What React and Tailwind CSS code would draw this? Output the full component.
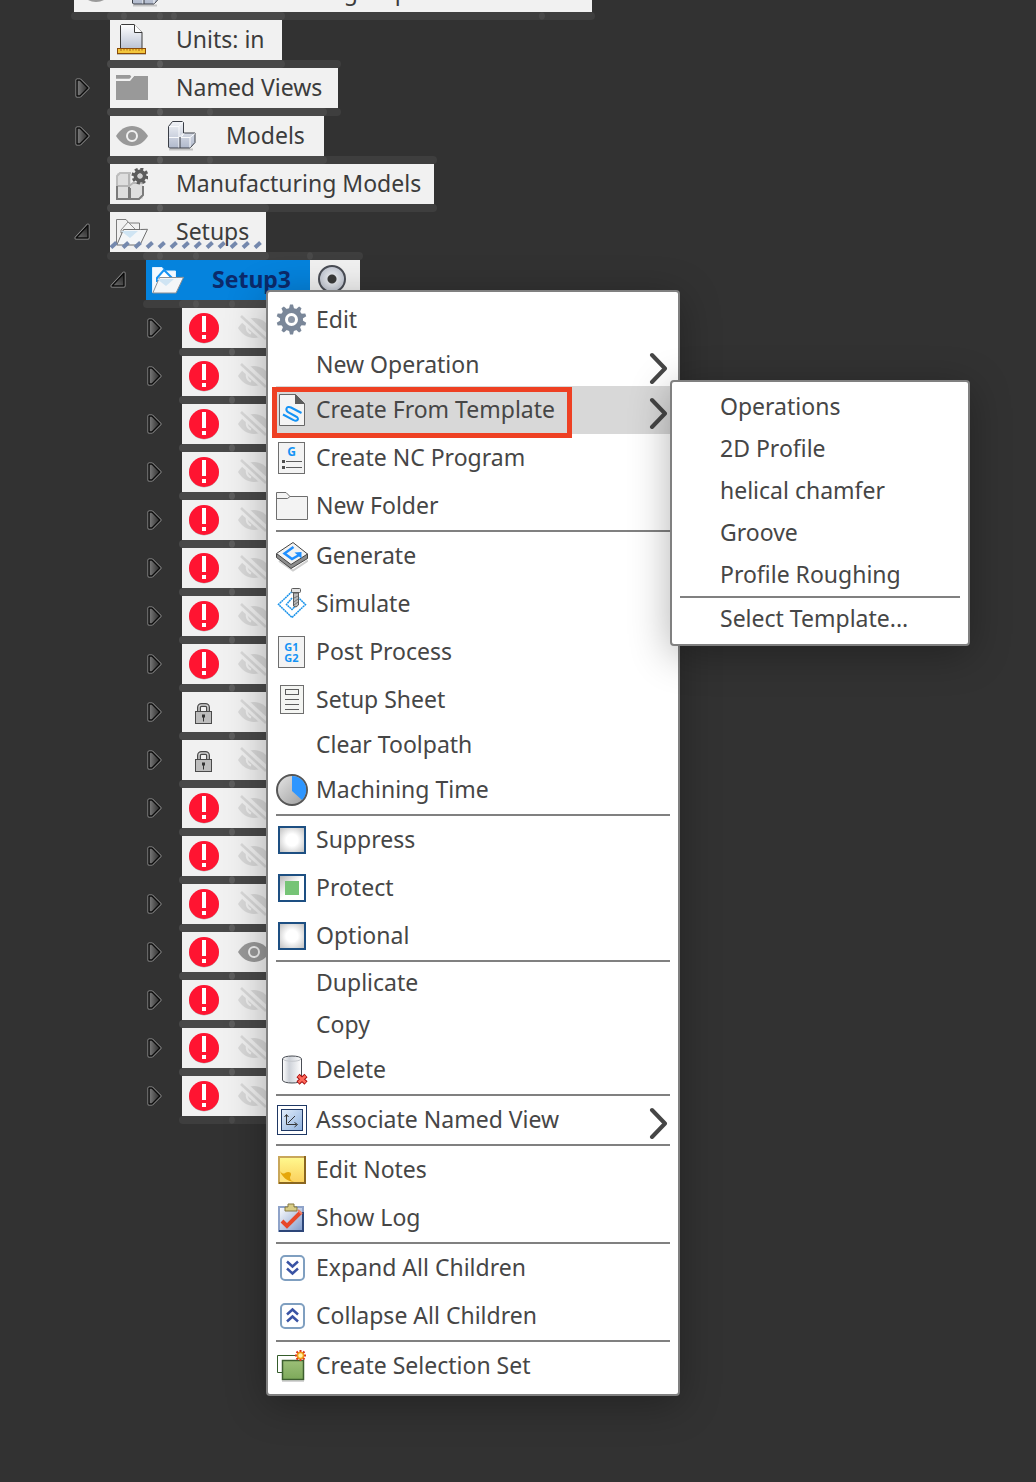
import React from "react";

const Svg = ({ children, label }) => (
  <svg width="32" height="32" viewBox="0 0 32 32" className="block shrink-0" aria-hidden={label ? undefined : true} aria-label={label}>
    {children}
  </svg>
);

/* ---------- tree icons ---------- */

const EyeIcon = () => (
  <Svg label="Visible">
    <path d="M0 16C4 9.500 9.500 6 16 6s12 3.500 16 10c-4 6.500-9.500 10-16 10S4 22.500 0 16z" fill="#999" />
    <circle cx="16" cy="16" r="5" fill="none" stroke="#f1f1f1" strokeWidth="2" />
  </Svg>
);

const EyeOffIcon = () => (
  <Svg label="Hidden">
    <path d="M0 16C4 9.500 9.500 6 16 6s12 3.500 16 10c-4 6.500-9.500 10-16 10S4 22.500 0 16z" fill="#d9d9d9" />
    <path d="M11 10.500a6.500 6.500 0 0 0 2 11" fill="none" stroke="#f1f1f1" strokeWidth="2" />
    <path d="M0 1l32 29" stroke="#f1f1f1" strokeWidth="9" />
    <path d="M3 4l25 23" stroke="#d9d9d9" strokeWidth="2.500" />
  </Svg>
);

const AlertIcon = () => (
  <Svg label="Error">
    <circle cx="16" cy="16.500" r="15" fill="#b9b9b9" />
    <circle cx="16" cy="16" r="15" fill="#ff1431" />
    <path d="M14 4h4v16h-4zM14 23h4v4h-4z" fill="#fff" />
  </Svg>
);

const LockIcon = () => (
  <Svg label="Protected">
    <path d="M11 16v-4.500a2.500 2.500 0 0 1 2.500-2.500h4a2.500 2.500 0 0 1 2.500 2.500V16" fill="none" stroke="#4a4a4a" strokeWidth="4" />
    <path d="M11 16v-4.500a2.500 2.500 0 0 1 2.500-2.500h4a2.500 2.500 0 0 1 2.500 2.500V16" fill="none" stroke="#d0d0d0" strokeWidth="1.500" />
    <rect x="7.500" y="15.500" width="16" height="12" fill="#bdbdbd" stroke="#4a4a4a" />
    <path d="M14 18.500h3v3h-1v4h-1v-4h-1z" fill="#333" />
  </Svg>
);

const UnitsIcon = () => (
  <Svg>
    <defs>
      <linearGradient id="units-page" x1="0" y1="0" x2="0" y2="1">
        <stop offset="0" stopColor="#fff" />
        <stop offset="1" stopColor="#b9c1d3" />
      </linearGradient>
    </defs>
    <path d="M4.500 25V1.500l1-1H18l8 8V25z" fill="url(#units-page)" stroke="#3a3a3a" />
    <path d="M18.500.5v8H26" fill="#fff" stroke="#3a3a3a" />
    <path d="M1 30.500h29" stroke="#bbb" />
    <rect x="1.500" y="24.500" width="28" height="5" fill="#f3c63c" stroke="#8a4b08" />
    <path d="M5 25v2M8 25v1.500M11 25v1.500M14 25v2M17 25v1.500M20 25v1.500M23 25v2M26 25v1.500" stroke="#a8650f" />
  </Svg>
);

const FolderIcon = () => (
  <Svg>
    <path d="M0 9h14l4-5h14v24H0z" fill="#999" />
    <path d="M0 3h14l1.500 2-2 2H0z" fill="#999" />
    <path d="M0 7.500h14l3.500-4" fill="none" stroke="#f1f1f1" strokeWidth="1.500" />
  </Svg>
);

const BodiesIcon = () => (
  <Svg>
    <defs>
      <linearGradient id="body-fill" x1="0" y1="0" x2="0" y2="1">
        <stop offset="0" stopColor="#f1f3f7" />
        <stop offset="1" stopColor="#b0b9cc" />
      </linearGradient>
    </defs>
    <path d="M3 29.500h24" stroke="#c4c4c4" strokeWidth="2" />
    <path d="M2.500 6.500l4-5h10l1 1V13h11.500v9.500l-5 5.500H3.500l-1-1z" fill="url(#body-fill)" stroke="#3a3e46" />
    <path d="M3 6.500h10v21M13 6.500l4-5M15 17.500h9v10M15 17.500l3-4M24 17.500l5-4M3 17.500h10l4-4" fill="none" stroke="#f9fafc" />
    <path d="M14 17v11" stroke="#3a3e46" />
  </Svg>
);

const ManufacturingIcon = () => (
  <Svg>
    <path d="M1 5h14v11h12v15H1z" fill="#dedede" />
    <path d="M1 18V8l3-3h11" fill="none" stroke="#bdbdbd" strokeWidth="2" />
    <path d="M1 18h12V6M13 18l4-3h10" fill="none" stroke="#b5b5b5" strokeWidth="2" />
    <path d="M1 18v13h12V19M14 31h9l4-4V18M14 20v11M1 31h22" fill="none" stroke="#7b7b7b" strokeWidth="2" />
    <circle cx="24" cy="8" r="4.500" fill="none" stroke="#5c5c5c" strokeWidth="4" />
    <circle cx="24" cy="8" r="7" fill="none" stroke="#5c5c5c" strokeWidth="3" strokeDasharray="3 2.500" />
    <circle cx="24" cy="8" r="2.500" fill="#d0d0d0" />
  </Svg>
);

const SetupFolderIcon = ({ bright }) => (
  <Svg>
    <path d="M.5 29V3.500H10L13 7h10.500v9" fill={bright ? "#f3f9ff" : "none"} stroke={bright ? "#dff0ff" : "#7c7c7c"} />
    <path d="M5 14l7-8 8 8v3H5z" fill={bright ? "#fff" : "#f4f4f4"} stroke={bright ? "#1593f5" : "#8d8d8d"} strokeWidth={bright ? 2 : 1} />
    <path d="M7.500 13.500h17l7-.2-7.500 15.700H.800z" fill="#f4f6f8" stroke={bright ? "#8b8f94" : "#6e6e6e"} />
    <path d="M5 15h17l-8 7z" fill="#cfe4f3" />
  </Svg>
);

const Expander = ({ open }) => (
  <button type="button" aria-label={open ? "Collapse" : "Expand"} className="block">
    <svg width="16" height="20" viewBox="0 0 16 20" className="block">
      <defs>
        <linearGradient id="expander-fill">
          <stop offset="0" stopColor="#7d7d7d" />
          <stop offset="1" stopColor="#2a2a2a" />
        </linearGradient>
        <linearGradient id="expander-open" x1="1" y1="0" x2="0.3" y2="1">
          <stop offset="0" stopColor="#1a1a1a" />
          <stop offset="1" stopColor="#666" />
        </linearGradient>
      </defs>
      {open ? (
        <g strokeLinejoin="round">
          <path d="M14 3v13H2z" fill="#000" stroke="#9a9a9a" strokeWidth="3" />
          <path d="M14 3v13H2z" fill="url(#expander-open)" stroke="#0c0c0c" strokeWidth="1.500" />
        </g>
      ) : (
        <g strokeLinejoin="round">
          <path d="M3 2h3l8 8-8 8H3z" fill="#000" stroke="#9a9a9a" strokeWidth="3" />
          <path d="M3 2h3l8 8-8 8H3z" fill="url(#expander-fill)" stroke="#0c0c0c" strokeWidth="1.500" />
        </g>
      )}
    </svg>
  </button>
);

/* ---------- menu icons ---------- */

const GearIcon = () => (
  <Svg>
    <g fill="#7a8799">
      {[0, 36, 72, 108, 144].map((a) => (
        <path key={a} d="M14 0.500h3l1 4v22l-1 4h-3l-1-4v-22z" transform={`rotate(${a} 15.500 15.500)`} />
      ))}
      <circle cx="15.500" cy="15.500" r="11.500" />
    </g>
    <circle cx="15.500" cy="15.500" r="5" fill="#8a95a5" stroke="#fff" strokeWidth="3" />
  </Svg>
);

const TemplateIcon = () => (
  <Svg>
    <path d="M3.500.5h16l9 9v22h-25z" fill="#f4f4f4" stroke="#666" />
    <path d="M19 0v10h10z" fill="#5c5c5c" />
    <path d="M25.500 19L15 13.500c-2-1-4-.5-4.500 1s.5 3 2 4l7.500 4c2 1 2.500 2.500 1.500 3.500s-2.500 1-4 0L7 20.500" fill="none" stroke="#1593f5" strokeWidth="2" />
  </Svg>
);

const NcProgramIcon = () => (
  <Svg>
    <rect x="2.500" y=".5" width="26" height="31" fill="#f3f3f3" stroke="#6e6e6e" />
    <text x="15.500" y="14" textAnchor="middle" fontFamily="Noto Sans" fontWeight="700" fontSize="12" fill="#1593f5">G</text>
    <path d="M6 18h3v3H6zM6 24h3v3H6z" fill="#4e4e4e" />
    <path d="M10 19.500h16M10 25.500h16" stroke="#5c5c5c" />
  </Svg>
);

const NewFolderIcon = () => (
  <Svg>
    <path d="M.5 2.500H10l4 4h17.500v23H.5z" fill="#f3f3f3" stroke="#6e6e6e" />
    <path d="M.5 8.500h11l2.500-2" fill="none" stroke="#6e6e6e" />
  </Svg>
);

const GenerateIcon = () => (
  <Svg>
    <path d="M3 21l14 9.500 15-10" fill="none" stroke="#cfcfcf" strokeWidth="2" />
    <path d="M.5 14v3.500L15 28.500l16.500-10V14z" fill="#8d8d8d" stroke="#444" />
    <path d="M.5 13.500L17 2.500l14.500 11.500L15 24.500z" fill="#f3f3f3" stroke="#444" />
    <path d="M17.500 7l-9 6.500 7.500 5.500 8-4.500" fill="none" stroke="#1f8fff" strokeWidth="2.500" />
    <path d="M18.500 12.500l7-.5 0 6.500z" fill="#1f8fff" />
  </Svg>
);

const SimulateIcon = () => (
  <Svg>
    <path d="M16 3.500L2.500 16.500l13.500 13 13.500-13z" fill="#fff" stroke="#1b93ea" strokeWidth="1.500" strokeDasharray="2 .5" />
    <path d="M16 10l-5.500 6.500 5.500 5 5-5" fill="none" stroke="#1b93ea" strokeWidth="1.500" strokeDasharray="2 .5" />
    <path d="M17.500 5h5v12l-2.500 2-2.500-1z" fill="#b9b9b9" stroke="#5b5b5b" />
    <path d="M18 10l4-2M18 14l4-3M18 17l4-3" stroke="#777" />
    <rect x="15.500" y=".5" width="9" height="4" rx="1" fill="#e3e3e3" stroke="#5b5b5b" />
  </Svg>
);

const PostIcon = () => (
  <Svg>
    <rect x="2.500" y=".5" width="26" height="31" fill="#f3f3f3" stroke="#6e6e6e" />
    <g fontFamily="Noto Sans" fontWeight="700" fontSize="11" fill="#1593f5" textAnchor="middle">
      <text x="15.500" y="15">G1</text>
      <text x="15.500" y="26">G2</text>
    </g>
  </Svg>
);

const SheetIcon = () => (
  <Svg>
    <rect x="4.500" y="1.500" width="23" height="28" fill="#f4f5f2" stroke="#6e6e6e" />
    <rect x="9.500" y="5.500" width="13" height="5" fill="none" stroke="#5c5c5c" />
    <path d="M9 15.500h14M9 20.500h14M9 25.500h14" stroke="#5c5c5c" />
  </Svg>
);

const TimeIcon = () => (
  <Svg>
    <defs>
      <linearGradient id="clock-face" x1="0" y1="0" x2="1" y2="1">
        <stop offset="0" stopColor="#e6e6e6" />
        <stop offset="1" stopColor="#9b9b9b" />
      </linearGradient>
    </defs>
    <circle cx="16" cy="16" r="15" fill="url(#clock-face)" stroke="#565656" strokeWidth="2" />
    <path d="M16 2a14 14 0 0 1 10 24L16 17z" fill="#2e96ff" />
  </Svg>
);

const DeleteIcon = () => (
  <Svg>
    <defs>
      <linearGradient id="bin-fill">
        <stop offset="0" stopColor="#fff" />
        <stop offset=".35" stopColor="#cdd1d8" />
        <stop offset="1" stopColor="#fff" />
      </linearGradient>
    </defs>
    <path d="M6.500 5c0-4 19-4 19 0v21c0 4-19 4-19 0z" fill="url(#bin-fill)" stroke="#4a4e55" />
    <path d="M7 5c1 3 17 3 18 0" fill="none" stroke="#c5c8cd" />
    <path d="M22 21.500l8 7.500M30 21.500l-8 7.500" stroke="#a80f0f" strokeWidth="4.500" />
    <path d="M22.500 22l7 6.500M29.500 22l-7 6.500" stroke="#ff6a5c" strokeWidth="2.500" />
  </Svg>
);

const NamedViewIcon = () => (
  <Svg>
    <defs>
      <linearGradient id="view-fill" x1="0" y1="0" x2="1" y2="1">
        <stop offset="0" stopColor="#e2edfb" />
        <stop offset="1" stopColor="#8fb1dd" />
      </linearGradient>
    </defs>
    <rect x="1.500" y="1.500" width="29" height="29" fill="#fff" stroke="#1f3864" />
    <rect x="5.500" y="5.500" width="21" height="21" fill="url(#view-fill)" stroke="#1f3864" />
    <path d="M10.500 11v9.500h10M12 19l7-7M8.500 13l2-2.500 2 2.500M18.500 18.500l3 2-3 2.500" fill="none" stroke="#333" />
  </Svg>
);

const NotesIcon = () => (
  <Svg>
    <defs>
      <linearGradient id="note-fill" x1="0" y1="0" x2="0" y2="1">
        <stop offset="0" stopColor="#fff98f" />
        <stop offset="1" stopColor="#fbcf5c" />
      </linearGradient>
    </defs>
    <rect x="3" y="3" width="26" height="26" fill="url(#note-fill)" stroke="#c9a75a" strokeWidth="2" />
    <path d="M29 2v27H3" fill="none" stroke="#8a6620" strokeWidth="2" />
    <path d="M4 16c2 6 6 10 14 12H4z" fill="#ffe27a" />
    <path d="M4 17c2 3 4 3 5 2 3-2 6-1 6 1s-1 2-1 4 2 3 4 4c-7-1-12-5-14-11z" fill="#e5a60a" />
  </Svg>
);

const LogIcon = () => (
  <Svg>
    <defs>
      <linearGradient id="log-fill" x1="0" y1="0" x2="1" y2="1">
        <stop offset="0" stopColor="#fff" />
        <stop offset="1" stopColor="#7f9acb" />
      </linearGradient>
    </defs>
    <rect x="3" y="5" width="24" height="24" fill="url(#log-fill)" stroke="#8fa3c9" strokeWidth="2" />
    <path d="M27 10v19H3" fill="none" stroke="#2d4679" strokeWidth="2" />
    <path d="M9 5h3V2h6v3h3v4H9z" fill="#d8cc84" stroke="#857842" />
    <path d="M6 19l5 5L25 10" fill="none" stroke="#e8482a" strokeWidth="4" />
    <path d="M22 8l4 4" stroke="#f08068" strokeWidth="2" />
  </Svg>
);

const ExpandAllIcon = ({ up }) => (
  <Svg>
    <rect x="5" y="4" width="23" height="24" rx="4" fill="#fff" stroke="#7f9fc0" strokeWidth="2" />
    <path
      d={up ? "M11 14.500l5.500-5 5.500 5M11 21.500l5.500-5 5.500 5" : "M11 9.500l5.500 5 5.500-5M11 16.500l5.500 5 5.500-5"}
      fill="none" stroke="#3953a4" strokeWidth="2.500"
    />
  </Svg>
);

const SelectionSetIcon = () => (
  <Svg>
    <defs>
      <linearGradient id="set-fill" x1="0" y1="0" x2="0" y2="1">
        <stop offset="0" stopColor="#9cbf78" />
        <stop offset="1" stopColor="#7da95a" />
      </linearGradient>
    </defs>
    <path d="M6 22.500H1.500v-17H20" fill="none" stroke="#355c2b" />
    <rect x="6.500" y="10.500" width="21" height="19" fill="url(#set-fill)" stroke="#3d5f2f" strokeWidth="1.500" />
    <path d="M6 31h22" stroke="#a9a9a9" />
    <path d="M24.500 0v11M19 5.500h11M20.500 1.500l8 8M28.500 1.500l-8 8" stroke="#d8321c" strokeWidth="2" />
    <circle cx="24.500" cy="5.500" r="3" fill="#fff6a8" stroke="#f39a14" strokeWidth="1.500" />
  </Svg>
);

const Chevron = () => (
  <svg width="20" height="32" viewBox="0 0 20 32" className="mt-1.5 mr-px block shrink-0" aria-hidden="true">
    <path d="M3 3L16 16.500 3 30" fill="none" stroke="#464646" strokeWidth="4" strokeLinecap="round" strokeLinejoin="round" />
  </svg>
);

/* ---------- tree ---------- */

const Cell = ({ children, className = "" }) => (
  <div
    className={
      "relative flex h-10 shrink-0 items-center bg-[#f1f1f1] before:absolute before:-inset-x-[3px] before:-top-2 before:h-2 before:rounded-sm before:bg-white/6 after:absolute after:-inset-x-[3px] after:-bottom-2 after:h-2 after:rounded-sm after:bg-white/6 " +
      className
    }
  >
    {children}
  </div>
);

const IconCell = ({ children, className = "" }) => <Cell className={"w-[50px] pl-1.5 " + className}>{children}</Cell>;

const levels = ["pl-0", "pl-9", "pl-18", "pl-27"];

const Row = ({ level, expander, children }) => (
  <li className={"flex items-center " + levels[level]}>
    <span className="w-9 shrink-0">{expander && <Expander open={expander === "open"} />}</span>
    {children}
  </li>
);

const Label = ({ children, className = "" }) => <Cell className={"pb-0.5 pl-4 pr-3 whitespace-nowrap " + className}>{children}</Cell>;

const operations = [
  "error", "error", "error", "error", "error", "error", "error", "error", "lock", "lock",
  "error", "error", "error", "shown", "error", "error", "error",
];

const stripes = [0, 12, 24, 36, 48, 60, 72, 84, 96, 108, 120, 132, 144];

const Tree = () => (
  <ul className="-mt-7 flex flex-col gap-2 pl-[38px] text-[#3c3c3c]">
    <Row level={0}>
      <IconCell><EyeIcon /></IconCell>
      <IconCell><BodiesIcon /></IconCell>
      <Label className="min-w-[368px]">Commissioning Duplicate v1</Label>
      <IconCell />
    </Row>
    <Row level={1}>
      <IconCell><UnitsIcon /></IconCell>
      <Label className="min-w-[122px]">Units: in</Label>
    </Row>
    <Row level={1} expander="closed">
      <IconCell><FolderIcon /></IconCell>
      <Label className="min-w-[178px]">Named Views</Label>
    </Row>
    <Row level={1} expander="closed">
      <IconCell><EyeIcon /></IconCell>
      <IconCell><BodiesIcon /></IconCell>
      <Label className="min-w-[114px]">Models</Label>
    </Row>
    <Row level={1}>
      <IconCell><ManufacturingIcon /></IconCell>
      <Label className="min-w-[274px]">Manufacturing Models</Label>
    </Row>
    <Row level={1} expander="open">
      <div className="relative flex">
        <IconCell><SetupFolderIcon /></IconCell>
        <Label className="min-w-[106px]">Setups</Label>
        <svg className="absolute bottom-0.5 left-0 h-2.5 w-full" aria-hidden="true">
          {stripes.map((x) => (
            <path key={x} d={`M${x + 1} 7.500l5.500-5`} stroke="#7488ad" strokeWidth="4" />
          ))}
        </svg>
      </div>
    </Row>
    <Row level={2} expander="open">
      <IconCell className="bg-[#0583dd]!"><SetupFolderIcon bright /></IconCell>
      <Label className="min-w-[114px] bg-[#0583dd]! font-bold text-[#0b2a6b]">Setup3</Label>
      <Cell className="w-[50px] pb-0.5 pl-2">
        <input
          type="radio"
          name="active-setup"
          aria-label="Activate Setup3"
          defaultChecked
          className="size-7 appearance-none rounded-full border-2 border-[#4a4d55] bg-[radial-gradient(circle,#3a3a3a_0_4px,#e3e6ec_5px,#c3c8d3_12px)]"
        />
      </Cell>
    </Row>
    {operations.map((kind, i) => (
      <Row key={i} level={3} expander="closed">
        <IconCell>{kind === "lock" ? <LockIcon /> : <AlertIcon />}</IconCell>
        <IconCell>{kind === "shown" ? <EyeIcon /> : <EyeOffIcon />}</IconCell>
      </Row>
    ))}
  </ul>
);

/* ---------- menus ---------- */

const Separator = () => <div role="separator" className="h-0.5 bg-[#808080]" />;

const Item = ({ icon, children, arrow, active }) => (
  <button
    type="button"
    role="menuitem"
    className={"flex w-full items-center gap-2 text-left whitespace-nowrap " + (icon ? "h-12 " : "h-[42px] ") + (active ? "bg-[#d8d8d8]" : "")}
  >
    <span className="w-8 shrink-0">{icon}</span>
    <span className="flex-1 pb-0.5">{children}</span>
    {arrow && <Chevron />}
  </button>
);

const CheckItem = ({ children, checked }) => (
  <label className="flex h-12 items-center whitespace-nowrap">
    <input
      type="checkbox"
      defaultChecked={checked}
      className="mr-2.5 ml-0.5 size-7 appearance-none border-2 border-[#1d4f82] bg-[radial-gradient(circle,#fff_35%,#c0c0c0)] checked:bg-[linear-gradient(#76c476,#76c476),linear-gradient(135deg,#b8b8b8,#fff_50%)] checked:bg-[length:14px_14px,100%_100%] checked:bg-center checked:bg-no-repeat"
    />
    <span className="pb-0.5">{children}</span>
  </label>
);

const SubItem = ({ children }) => (
  <button type="button" role="menuitem" className="block h-[42px] w-full pb-0.5 pl-10 text-left whitespace-nowrap">
    {children}
  </button>
);

const panel = "absolute rounded border-2 border-[#808080] bg-white px-2 py-1 shadow-[0_8px_40px_rgba(0,0,0,0.3)] ";

const ContextMenu = () => (
  <div role="menu" aria-label="Setup actions" className={panel + "top-[290px] left-[266px] w-[414px]"}>
    <Item icon={<GearIcon />}>Edit</Item>
    <Item arrow>New Operation</Item>
    <Item icon={<TemplateIcon />} arrow active>Create From Template</Item>
    <Item icon={<NcProgramIcon />}>Create NC Program</Item>
    <Item icon={<NewFolderIcon />}>New Folder</Item>
    <Separator />
    <Item icon={<GenerateIcon />}>Generate</Item>
    <Item icon={<SimulateIcon />}>Simulate</Item>
    <Item icon={<PostIcon />}>Post Process</Item>
    <Item icon={<SheetIcon />}>Setup Sheet</Item>
    <Item>Clear Toolpath</Item>
    <Item icon={<TimeIcon />}>Machining Time</Item>
    <Separator />
    <CheckItem>Suppress</CheckItem>
    <CheckItem checked>Protect</CheckItem>
    <CheckItem>Optional</CheckItem>
    <Separator />
    <Item>Duplicate</Item>
    <Item>Copy</Item>
    <Item icon={<DeleteIcon />}>Delete</Item>
    <Separator />
    <Item icon={<NamedViewIcon />} arrow>Associate Named View</Item>
    <Separator />
    <Item icon={<NotesIcon />}>Edit Notes</Item>
    <Item icon={<LogIcon />}>Show Log</Item>
    <Separator />
    <Item icon={<ExpandAllIcon />}>Expand All Children</Item>
    <Item icon={<ExpandAllIcon up />}>Collapse All Children</Item>
    <Separator />
    <Item icon={<SelectionSetIcon />}>Create Selection Set</Item>
    <div className="pointer-events-none absolute top-[95px] left-1 h-[51px] w-[300px] border-[5px] border-[#ee4023]" />
  </div>
);

const TemplateMenu = () => (
  <div role="menu" aria-label="Create From Template" className={panel + "top-[380px] left-[670px] w-[300px]"}>
    <SubItem>Operations</SubItem>
    <SubItem>2D Profile</SubItem>
    <SubItem>helical chamfer</SubItem>
    <SubItem>Groove</SubItem>
    <SubItem>Profile Roughing</SubItem>
    <Separator />
    <SubItem>Select Template...</SubItem>
  </div>
);

export default function App() {
  return (
    <main className="relative min-h-screen overflow-hidden bg-[#323232] font-['Noto_Sans','Open_Sans',sans-serif] text-[23px] leading-8 text-[#464646]">
      <Tree />
      <ContextMenu />
      <TemplateMenu />
    </main>
  );
}
